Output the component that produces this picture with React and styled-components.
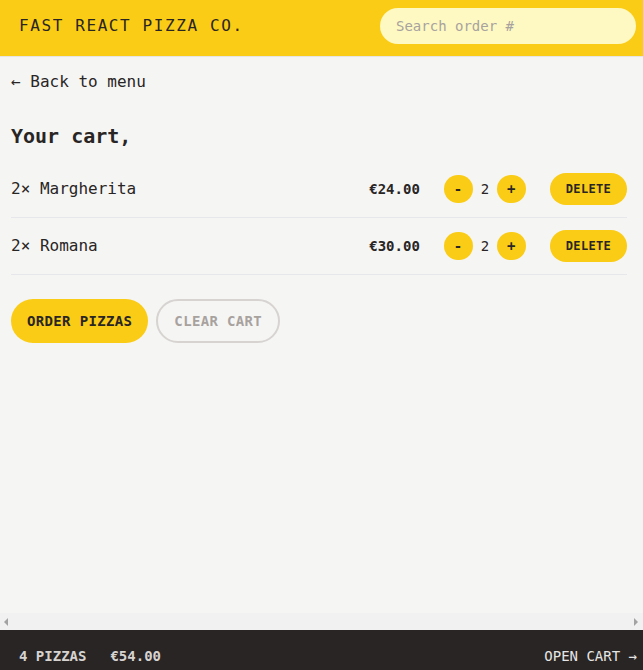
import styled, { createGlobalStyle } from "styled-components";

const GlobalStyle = createGlobalStyle`
  html, body {
    margin: 0;
    padding: 0;
    overflow: hidden;
  }
  body {
    font-family: "DejaVu Sans Mono", "Liberation Mono", monospace;
    color: #292524;
    background-color: #f5f5f4;
  }
  * {
    box-sizing: border-box;
  }
`;

const Layout = styled.div`
  display: grid;
  grid-template-rows: auto 1fr auto;
  height: calc(100vh + 12px);
`;

const Header = styled.header`
  display: flex;
  align-items: center;
  justify-content: space-between;
  padding: 8px 7px 12px 19px;
  background-color: #facc15;
  border-bottom: 1px solid #e7e5e4;
`;

const Logo = styled.a`
  font-size: 16px;
  line-height: 24px;
  letter-spacing: 0.1em;
  text-transform: uppercase;
  color: #292524;
  text-decoration: none;
`;

const Search = styled.input`
  width: 256px;
  height: 36px;
  border: none;
  border-radius: 999px;
  background-color: #fef9c3;
  padding: 0 16px;
  font-family: inherit;
  font-size: 14px;
  color: #292524;
  outline: none;

  &::placeholder {
    color: #a8a29e;
  }
`;

const Main = styled.main`
  display: flex;
  flex-direction: column;
  min-height: 0;
  overflow: hidden;
`;

const Content = styled.div`
  flex: 1;
  overflow-y: auto;
  padding: 13px 16px 12px 11px;
`;

// horizontal scrollbar track shown at the bottom of the main area
const ScrollBar = styled.div`
  display: flex;
  align-items: center;
  justify-content: space-between;
  height: 17px;
  padding: 0 5px 0 4px;
  background-color: #f1f1f1;
`;

const Arrow = styled.span`
  width: 0;
  height: 0;
  border-top: 4px solid transparent;
  border-bottom: 4px solid transparent;
  ${(p) =>
    p.$dir === "left"
      ? "border-right: 4px solid #a3a3a3;"
      : "border-left: 4px solid #a3a3a3;"}
`;

const BackLink = styled.a`
  font-size: 16px;
  line-height: 24px;
  color: #292524;
  text-decoration: none;
`;

const Title = styled.h2`
  margin: 28px 0 0;
  font-size: 20px;
  line-height: 28px;
  font-weight: 600;
`;

const List = styled.ul`
  list-style: none;
  margin: 11px 0 0;
  padding: 0;
`;

const Item = styled.li`
  display: flex;
  align-items: center;
  justify-content: space-between;
  padding: 12px 0;
  border-bottom: 1px solid #e5e7eb;
`;

const Name = styled.p`
  margin: 0;
  font-size: 16px;
  line-height: 24px;
`;

const Controls = styled.div`
  display: flex;
  align-items: center;
  gap: 24px;
`;

const Price = styled.p`
  margin: 0;
  font-size: 14px;
  line-height: 20px;
  font-weight: 700;
`;

const Quantity = styled.div`
  display: flex;
  align-items: center;
  gap: 8px;
  font-size: 14px;
  font-weight: 500;
`;

const Button = styled.button`
  display: inline-block;
  border: none;
  border-radius: 999px;
  background-color: #facc15;
  color: #292524;
  font-family: inherit;
  font-weight: 600;
  text-transform: uppercase;
  letter-spacing: 0.025em;
  cursor: pointer;
  font-size: ${(p) => (p.$size === "small" ? "12px" : "14px")};
  line-height: ${(p) => (p.$size === "small" ? "16px" : "20px")};
  padding: ${(p) =>
    p.$size === "round" ? "4px 10px" : p.$size === "small" ? "8px 16px" : "12px 16px"};
`;

const SecondaryButton = styled.button`
  display: inline-block;
  border: 2px solid #d6d3d1;
  border-radius: 999px;
  background: transparent;
  color: #a8a29e;
  font-family: inherit;
  font-size: 14px;
  line-height: 20px;
  font-weight: 600;
  letter-spacing: 0.025em;
  text-transform: uppercase;
  padding: 10px 16px;
  cursor: pointer;
`;

const Actions = styled.div`
  display: flex;
  gap: 8px;
  margin-top: 24px;
`;

const Footer = styled.footer`
  display: flex;
  align-items: center;
  justify-content: space-between;
  padding: 16px 6px 16px 19px;
  background-color: #292524;
  color: #e7e5e4;
  font-size: 14px;
  line-height: 20px;
  text-transform: uppercase;
`;

const Summary = styled.p`
  margin: 0;
  display: flex;
  gap: 24px;
  font-weight: 600;
  color: #d6d3d1;
`;

const OpenCart = styled.a`
  color: #e7e5e4;
  text-decoration: none;
`;

const cart = [
  { id: 1, name: "Margherita", quantity: 2, total: 24 },
  { id: 2, name: "Romana", quantity: 2, total: 30 },
];

export default function App() {
  return (
    <>
      <GlobalStyle />
      <Layout>
        <Header>
          <Logo href="#">Fast React Pizza Co.</Logo>
          <Search placeholder="Search order #" />
        </Header>
        <Main>
          <Content>
            <BackLink href="#">← Back to menu</BackLink>
            <Title>Your cart,</Title>
            <List>
              {cart.map((item) => (
                <Item key={item.id}>
                  <Name>
                    {item.quantity}× {item.name}
                  </Name>
                  <Controls>
                    <Price>€{item.total.toFixed(2)}</Price>
                    <Quantity>
                      <Button $size="round">-</Button>
                      <span>{item.quantity}</span>
                      <Button $size="round">+</Button>
                    </Quantity>
                    <Button $size="small">Delete</Button>
                  </Controls>
                </Item>
              ))}
            </List>
            <Actions>
              <Button>Order pizzas</Button>
              <SecondaryButton>Clear cart</SecondaryButton>
            </Actions>
          </Content>
          <ScrollBar>
            <Arrow $dir="left" />
            <Arrow $dir="right" />
          </ScrollBar>
        </Main>
        <Footer>
          <Summary>
            <span>4 pizzas</span>
            <span>€54.00</span>
          </Summary>
          <OpenCart href="#">Open cart →</OpenCart>
        </Footer>
      </Layout>
    </>
  );
}
